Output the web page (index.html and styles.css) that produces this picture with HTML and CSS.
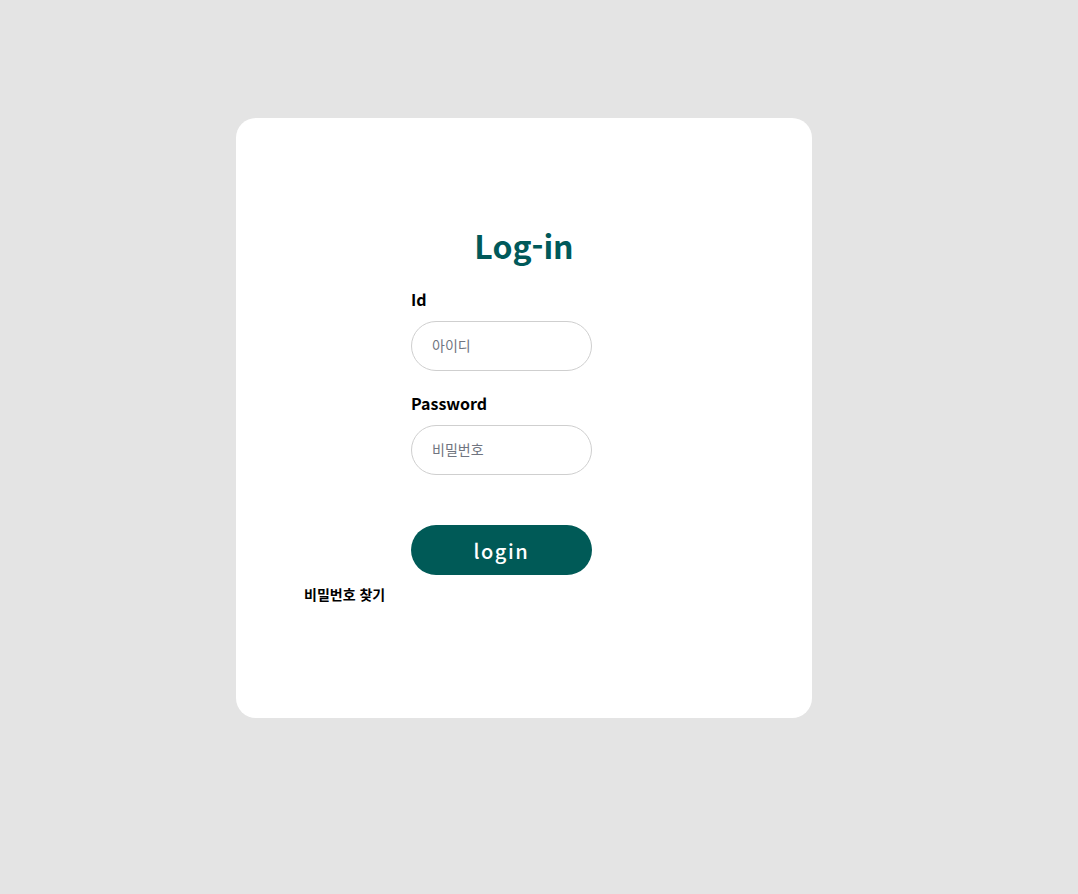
FILE: index.html
```html
<!DOCTYPE html>
<html lang="ko">
<head>
<meta charset="utf-8">
<link rel="stylesheet" href="styles.css">
</head>
<body>
<div class="page">
  <div class="card">
    <h1 class="title">Log-in</h1>
    <form class="form">
      <label class="label">Id</label>
      <input class="field" type="text" placeholder="아이디">
      <label class="label label-pw">Password</label>
      <input class="field" type="password" placeholder="비밀번호">
      <button class="btn" type="button">login</button>
    </form>
    <div class="find"><a class="find-link">비밀번호 찾기</a></div>
  </div>
</div>
</body>
</html>
```
FILE: styles.css
```css
html, body {
  margin: 0;
  padding: 0;
  background: #e4e4e4;
  font-family: "Noto Sans CJK KR", "Noto Sans", sans-serif;
}
.page {
  padding-top: 118px;
  padding-left: 236px;
}
.card {
  width: 576px;
  height: 600px;
  background: #fff;
  border-radius: 20px;
  box-sizing: border-box;
  padding-top: 106px;
}
.title {
  margin: 0;
  text-align: center;
  color: #00595a;
  font-size: 32px;
  font-weight: 700;
  line-height: 43px;
}
.form {
  width: 226px;
  margin: 20px auto 0;
  display: flex;
  flex-direction: column;
}
.label {
  font-size: 16px;
  font-weight: 700;
  color: #000;
  line-height: 24px;
  margin-bottom: 10px;
}
.label-pw {
  margin-top: 20px;
}
.field {
  width: 80%;
  height: 50px;
  box-sizing: border-box;
  border: 1px solid #cfcfcf;
  border-radius: 25px;
  padding: 0 20px 3px;
  font-family: inherit;
  font-size: 14px;
  outline: none;
}
.field::placeholder {
  color: #707580;
}
.btn {
  width: 80%;
  height: 50px;
  margin-top: 50px;
  border: none;
  border-radius: 25px;
  background: #005a57;
  color: #fff;
  font-family: inherit;
  font-size: 20px;
  letter-spacing: 1.5px;
  font-weight: 500;
}
.find {
  padding-left: 68px;
  margin-top: 6px;
}
.find-link {
  font-size: 14px;
  font-weight: 700;
  color: #000;
}
```
